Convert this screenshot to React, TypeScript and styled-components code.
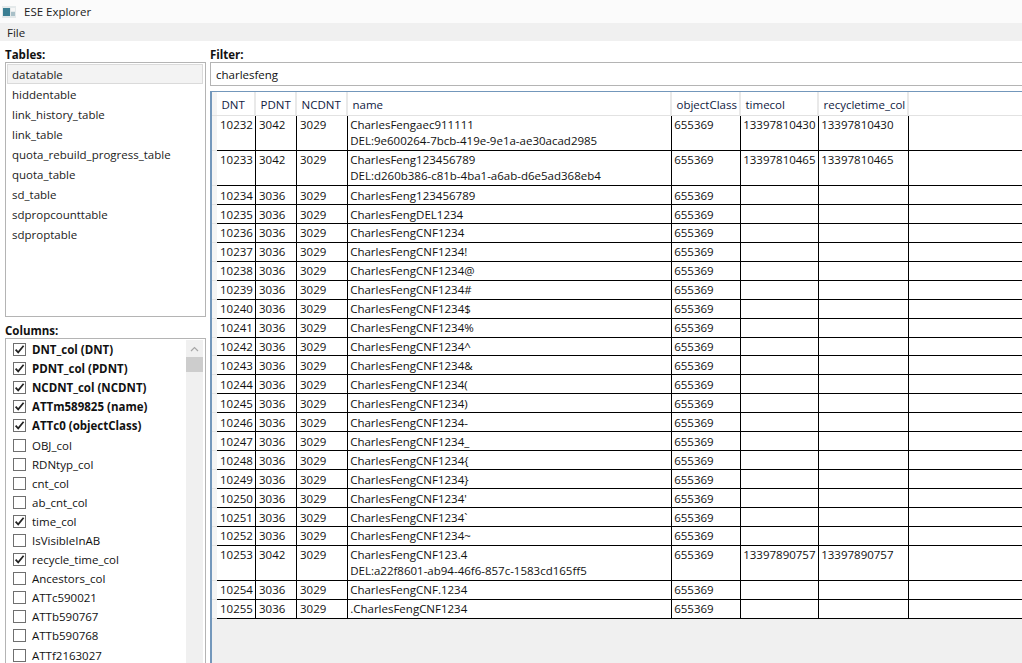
import React from "react";
import styled, { createGlobalStyle } from "styled-components";

const Global = createGlobalStyle`
  html, body { margin: 0; padding: 0; background: #fff; }
  body { width: 1022px; height: 663px; overflow: hidden; font-family: "Open Sans", "Noto Sans", sans-serif; font-size: 11.5px; color: #111; }
  #root { width: 1022px; height: 663px; overflow: hidden; }
`;

const Window = styled.div`
  width: 1022px; height: 663px; display: flex; flex-direction: column; overflow: hidden; background: #fff;
`;
const TitleBar = styled.div`
  height: 23px; flex: none; box-sizing: border-box; padding-left: 2px; display: flex; align-items: center; gap: 8px; background: #fbfbfb; color: #222;
`;
const MenuBar = styled.div`
  height: 18px; flex: none; display: flex; align-items: center; padding-left: 7px; background: #f0f0f0; color: #222;
`;
const Body = styled.div`
  flex: 1; min-height: 0; display: grid; grid-template-columns: 201px 1fr; column-gap: 4px; padding: 7px 0 0 5px;
`;
const LeftPane = styled.div`
  display: flex; flex-direction: column; min-height: 0;
`;
const RightPane = styled.div`
  display: flex; flex-direction: column; min-height: 0; min-width: 0;
`;
const PaneLabel = styled.div`
  height: 14px; line-height: 14px; font-weight: 700; color: #111; flex: none;
`;
const TableList = styled.div`
  height: 255px; flex: none; box-sizing: border-box; border: 1px solid #b4b4b4; padding: 1px 2px 1px 1px; display: flex; flex-direction: column;
`;
const TableItem = styled.div<{ $selected?: boolean }>`
  height: 20px; flex: none; box-sizing: border-box; line-height: 20px; padding-left: 4px; color: #222;
  border: 1px solid ${(p) => (p.$selected ? "#dadada" : "transparent")};
  background: ${(p) => (p.$selected ? "#f3f3f3" : "transparent")};
`;
const ColumnsLabel = styled(PaneLabel)`
  margin-top: 7px;
`;
const ColumnBox = styled.div`
  flex: 1; min-height: 0; box-sizing: border-box; border: 1px solid #b4b4b4; border-bottom: 0; display: flex; overflow: hidden; padding-top: 1px;
`;
const ColumnItems = styled.div`
  flex: 1; display: flex; flex-direction: column; padding-left: 7px; overflow: hidden;
`;
const ColumnRow = styled.div<{ $bold?: boolean }>`
  height: 19.1px; flex: none; display: flex; align-items: center; gap: 6px; font-weight: ${(p) => (p.$bold ? 700 : 400)}; color: #111;
`;
const Box = styled.span`
  width: 13px; height: 13px; box-sizing: border-box; border: 1px solid #6f6f6f; background: #fff; flex: none; display: flex; align-items: center; justify-content: center;
`;
const ScrollBar = styled.div`
  width: 17px; flex: none; margin: 0 2px 0 0; background: #f0f0f0; display: flex; flex-direction: column; align-items: center;
`;
const ScrollArrow = styled.div`
  height: 17px; width: 17px; flex: none; display: flex; align-items: center; justify-content: center;
`;
const ScrollThumb = styled.div`
  height: 15px; width: 17px; flex: none; background: #cdcdcd;
`;
const FilterInput = styled.div`
  height: 24px; flex: none; box-sizing: border-box; border: 1px solid #b4b4b4; border-right: 0; line-height: 24px; padding-left: 5px; color: #111;
`;
const Grid = styled.div`
  margin-top: 5px; flex: 1; min-height: 0; box-sizing: border-box; border-left: 2px solid #7397bb; border-top: 1px solid #7397bb; background: #f0f0f0; display: flex; flex-direction: column; overflow: hidden;
`;
const HeaderRow = styled.div`
  height: 24px; flex: none; display: flex; background: #fff; box-sizing: border-box; border-bottom: 1px solid #e2e2e2;
`;
const HeaderGutter = styled.div`
  width: 5px; flex: none; background: #f4f4f4; box-sizing: border-box;
`;
const HeaderCell = styled.div<{ $w: number }>`
  width: ${(p) => p.$w}px; flex: none; box-sizing: border-box; border-right: 2px solid #e9e9e9; padding-left: 4.5px; line-height: 26px; color: #10213f; white-space: nowrap; overflow: hidden;
`;
const HeaderFill = styled.div`
  flex: 1;
`;
const Row = styled.div<{ $h: number }>`
  height: ${(p) => p.$h}px; flex: none; display: flex; box-sizing: border-box;
`;
const RowGutter = styled.div`
  width: 5px; flex: none; background: #f4f4f4; box-sizing: border-box; border-bottom: 1px solid #e4e4e4;
`;
const RowBody = styled.div`
  flex: 1; display: flex; background: #fff; border-bottom: 1px solid #000; min-width: 0;
`;
const Cell = styled.div<{ $w: number; $tall: boolean; $inset: number }>`
  width: ${(p) => p.$w}px; flex: none; box-sizing: border-box; border-right: 1px solid #000;
  padding: ${(p) => (p.$tall ? "1px" : "1.6px")} 0 0 ${(p) => p.$inset}px;
  line-height: 16px; color: #111; white-space: pre; overflow: hidden;
`;

const IconLogo = () => (
  <svg width="14" height="14" viewBox="0 0 14 14">
    <rect x="0" y="1" width="14" height="12" fill="#e4e9ea" />
    <rect x="1" y="3" width="7" height="8" fill="#3b7f93" />
    <rect x="9" y="3" width="4" height="3" fill="#f6f6f6" />
    <rect x="9" y="7" width="4" height="4" fill="#a9c0c8" />
  </svg>
);
const Check = () => (
  <svg width="11" height="11" viewBox="0 0 11 11">
    <path d="M1.6 5.6 L4.2 8.4 L9.6 1.8" fill="none" stroke="#222" strokeWidth="1.7" />
  </svg>
);
const UpArrow = () => (
  <svg width="9" height="6" viewBox="0 0 9 6">
    <path d="M1 5 L4.5 1.5 L8 5" fill="none" stroke="#a6a6a6" strokeWidth="1.2" />
  </svg>
);

const tables = ["datatable", "hiddentable", "link_history_table", "link_table", "quota_rebuild_progress_table", "quota_table", "sd_table", "sdpropcounttable", "sdproptable"];
const columns: [string, boolean, boolean][] = [
  ["DNT_col (DNT)", true, true],
  ["PDNT_col (PDNT)", true, true],
  ["NCDNT_col (NCDNT)", true, true],
  ["ATTm589825 (name)", true, true],
  ["ATTc0 (objectClass)", true, true],
  ["OBJ_col", false, false],
  ["RDNtyp_col", false, false],
  ["cnt_col", false, false],
  ["ab_cnt_col", false, false],
  ["time_col", true, false],
  ["IsVisibleInAB", false, false],
  ["recycle_time_col", true, false],
  ["Ancestors_col", false, false],
  ["ATTc590021", false, false],
  ["ATTb590767", false, false],
  ["ATTb590768", false, false],
  ["ATTf2163027", false, false],
];
const widths = [39, 41, 51, 324, 69, 78, 90];
const insets = [3, 3, 3, 2.2, 2.2, 2.2, 2.2];
const headers = ["DNT", "PDNT", "NCDNT", "name", "objectClass", "timecol", "recycletime_col"];
const plain = (dnt: string, name: string) => [dnt, "3036", "3029", name, "655369", "", ""];
const rows: string[][] = [
  ["10232", "3042", "3029", "CharlesFengaec911111\nDEL:9e600264-7bcb-419e-9e1a-ae30acad2985", "655369", "13397810430", "13397810430"],
  ["10233", "3042", "3029", "CharlesFeng123456789\nDEL:d260b386-c81b-4ba1-a6ab-d6e5ad368eb4", "655369", "13397810465", "13397810465"],
  plain("10234", "CharlesFeng123456789"),
  plain("10235", "CharlesFengDEL1234"),
  plain("10236", "CharlesFengCNF1234"),
  plain("10237", "CharlesFengCNF1234!"),
  plain("10238", "CharlesFengCNF1234@"),
  plain("10239", "CharlesFengCNF1234#"),
  plain("10240", "CharlesFengCNF1234$"),
  plain("10241", "CharlesFengCNF1234%"),
  plain("10242", "CharlesFengCNF1234^"),
  plain("10243", "CharlesFengCNF1234&"),
  plain("10244", "CharlesFengCNF1234("),
  plain("10245", "CharlesFengCNF1234)"),
  plain("10246", "CharlesFengCNF1234-"),
  plain("10247", "CharlesFengCNF1234_"),
  plain("10248", "CharlesFengCNF1234{"),
  plain("10249", "CharlesFengCNF1234}"),
  plain("10250", "CharlesFengCNF1234'"),
  plain("10251", "CharlesFengCNF1234`"),
  plain("10252", "CharlesFengCNF1234~"),
  ["10253", "3042", "3029", "CharlesFengCNF123.4\nDEL:a22f8601-ab94-46f6-857c-1583cd165ff5", "655369", "13397890757", "13397890757"],
  plain("10254", "CharlesFengCNF.1234"),
  plain("10255", ".CharlesFengCNF1234"),
];

export default function App() {
  return (
    <Window>
      <Global />
      <TitleBar>
        <IconLogo />
        <span>ESE Explorer</span>
      </TitleBar>
      <MenuBar>File</MenuBar>
      <Body>
        <LeftPane>
          <PaneLabel>Tables:</PaneLabel>
          <TableList>
            {tables.map((t, i) => (
              <TableItem key={t} $selected={i === 0}>{t}</TableItem>
            ))}
          </TableList>
          <ColumnsLabel>Columns:</ColumnsLabel>
          <ColumnBox>
            <ColumnItems>
              {columns.map(([label, checked, bold]) => (
                <ColumnRow key={label} $bold={bold}>
                  <Box>{checked && <Check />}</Box>
                  <span>{label}</span>
                </ColumnRow>
              ))}
            </ColumnItems>
            <ScrollBar>
              <ScrollArrow><UpArrow /></ScrollArrow>
              <ScrollThumb />
            </ScrollBar>
          </ColumnBox>
        </LeftPane>
        <RightPane>
          <PaneLabel>Filter:</PaneLabel>
          <FilterInput>charlesfeng</FilterInput>
          <Grid>
            <HeaderRow>
              <HeaderGutter />
              {headers.map((h, i) => (
                <HeaderCell key={h} $w={widths[i]}>{h}</HeaderCell>
              ))}
              <HeaderFill />
            </HeaderRow>
            {rows.map((r) => {
              const tall = r[3].includes("\n");
              return (
                <Row key={r[0]} $h={tall ? 35 : 18.95}>
                  <RowGutter />
                  <RowBody>
                    {r.map((c, i) => (
                      <Cell key={i} $w={widths[i]} $tall={tall} $inset={insets[i]}>{c}</Cell>
                    ))}
                  </RowBody>
                </Row>
              );
            })}
          </Grid>
        </RightPane>
      </Body>
    </Window>
  );
}
